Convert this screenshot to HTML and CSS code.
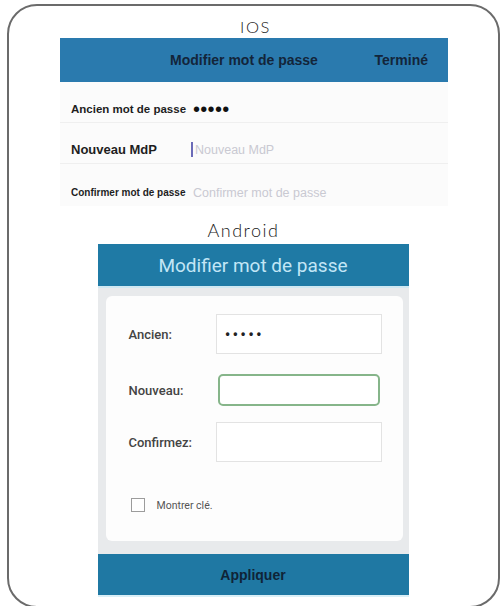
FILE: index.html
```html
<!DOCTYPE html>
<html lang="fr">
<head>
<meta charset="utf-8">
<link rel="stylesheet" href="styles.css">
</head>
<body>
<div class="frame">
  <div class="platform ios-label">IOS</div>
  <section class="ios">
    <header class="ios-bar">
      <span></span>
      <span class="ios-title">Modifier mot de passe</span>
      <span class="ios-done">Terminé</span>
    </header>
    <div class="ios-row">
      <span class="ios-key k-old">Ancien mot de passe</span>
      <span class="ios-dots">•••••</span>
    </div>
    <div class="ios-row">
      <span class="ios-key k-new">Nouveau MdP</span>
      <span class="ios-ph"><span class="caret"></span>Nouveau MdP</span>
    </div>
    <div class="ios-row last">
      <span class="ios-key k-conf">Confirmer mot de passe</span>
      <span class="ios-ph ph-conf">Confirmer mot de passe</span>
    </div>
  </section>
  <div class="platform and-label">Android</div>
  <section class="android">
    <header class="and-bar">Modifier mot de passe</header>
    <div class="and-body">
      <div class="card">
        <div class="field f-old">
          <span class="and-key">Ancien:</span>
          <span class="input"><span class="in-dots">•••••</span></span>
        </div>
        <div class="field f-new">
          <span class="and-key">Nouveau:</span>
          <span class="input focus"></span>
        </div>
        <div class="field f-conf">
          <span class="and-key">Confirmez:</span>
          <span class="input"></span>
        </div>
        <label class="check">
          <span class="box"></span>
          <span class="check-text">Montrer clé.</span>
        </label>
      </div>
    </div>
    <footer class="apply">Appliquer</footer>
  </section>
</div>
</body>
</html>
```

FILE: styles.css
```css
* { box-sizing: border-box; }
html, body { margin: 0; padding: 0; background: #ffffff; }
body { width: 501px; height: 606px; overflow: hidden; font-family: "Liberation Sans", Arial, sans-serif; }

.frame {
  margin: 4px 0 0 7px;
  width: 493px;
  height: 604px;
  border: 2.5px solid #6b6b6b;
  border-radius: 30px;
  padding-top: 11px;
  display: flex;
  flex-direction: column;
  align-items: center;
}

.platform {
  font-family: Lato, "Open Sans", sans-serif;
  font-weight: 300;
  color: #1a1a1a;
  line-height: 20px;
  height: 20px;
  text-align: center;
}
.ios-label { font-size: 16.5px; letter-spacing: 1.6px; margin-left: 4px; }
.and-label { font-size: 18px; letter-spacing: 1.5px; margin-top: 14px; margin-bottom: 4px; margin-left: -20px; }

.ios {
  margin-top: 1px;
  width: 388px;
  background: #fbfbfb;
  margin-left: 1px;
}
.ios-bar {
  height: 44px;
  background: #2a7aae;
  display: grid;
  grid-template-columns: 1fr auto 1fr;
  align-items: center;
  padding-right: 20px;
  color: #13253a;
  font-weight: bold;
  font-size: 14px;
}
.ios-done { justify-self: end; }
.ios-row {
  height: 41px;
  display: grid;
  grid-template-columns: 120px 1fr;
  align-items: end;
  padding: 0 0 6px 11px;
  border-bottom: 1px solid #efefef;
}
.ios-row.last { border-bottom: none; height: 42px; padding-bottom: 6px; }
.ios-key { color: #1e1e1e; font-weight: bold; white-space: nowrap; line-height: 14px; }
.k-old { font-size: 11.5px; }
.k-new { font-size: 13px; }
.k-conf { font-size: 10px; }
.ios-dots { font-size: 20px; line-height: 14px; color: #111; margin-left: 2px; letter-spacing: 0.3px; }
.ios-ph { color: #c9c9d2; font-size: 12.5px; line-height: 14px; display: flex; align-items: center; white-space: nowrap; }
.ph-conf { font-size: 12.5px; margin-left: 2px; }
.caret { width: 2px; height: 15px; background: #6b6bb8; margin-right: 2px; }

.android {
  width: 311px;
  margin-left: -1px;
  display: flex;
  flex-direction: column;
}
.and-bar {
  height: 44px;
  background: #1f7aa5;
  border-bottom: 2px solid #cfe8f2;
  color: #c2e6f6;
  font-family: Roboto, "Noto Sans", sans-serif;
  font-size: 19px;
  display: flex;
  align-items: center;
  justify-content: center;
}
.and-body {
  background: #e8eaec;
  padding: 8px 6px 13px 8px;
}
.card {
  background: #fdfdfd;
  border-radius: 6px;
  height: 245px;
  padding: 18px 0 0 23px;
  display: flex;
  flex-direction: column;
}
.field {
  display: grid;
  grid-template-columns: 87px 166px;
  align-items: center;
  height: 40px;
}
.f-new { margin-top: 16px; }
.f-conf { margin-top: 12px; }
.and-key {
  font-family: Roboto, "Noto Sans", sans-serif;
  font-weight: 500;
  font-size: 13px;
  color: #444;
}
.input {
  height: 40px;
  border: 1.5px solid #e3e3e3;
  background: #ffffff;
  display: flex;
  align-items: center;
  padding-left: 9px;
}
.input.focus {
  height: 32px;
  margin: 0 2px;
  border: 2px solid #86b58a;
  border-radius: 5px;
}
.in-dots { font-size: 12px; letter-spacing: 3.6px; color: #222; font-weight: bold; }
.check {
  margin-top: 36px;
  display: flex;
  align-items: center;
  padding-left: 2px;
}
.box {
  width: 14px;
  height: 14px;
  border: 1.5px solid #9c9c9c;
  background: #fff;
}
.check-text {
  margin-left: 12px;
  font-family: Roboto, "Noto Sans", sans-serif;
  font-size: 10.5px;
  color: #555;
}
.apply {
  height: 43px;
  background: #1f78a3;
  border-bottom: 2px solid #d9eff7;
  color: #0f2437;
  font-weight: bold;
  font-size: 14px;
  display: flex;
  align-items: center;
  justify-content: center;
}
```
